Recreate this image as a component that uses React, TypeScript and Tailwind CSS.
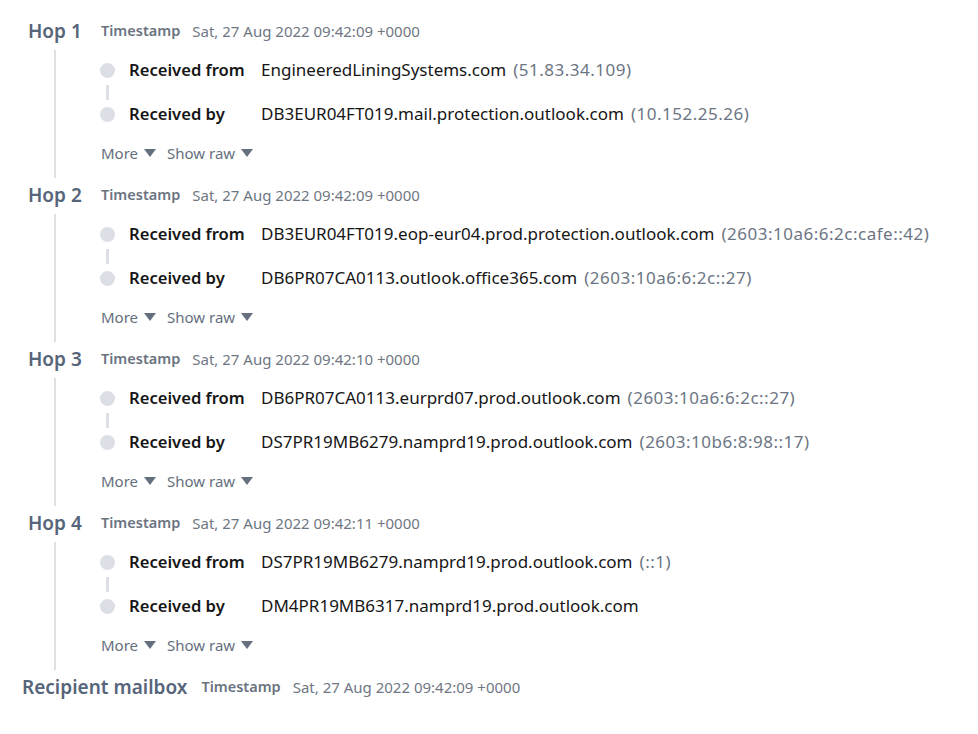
const hops = [
  {
    name: 'Hop 1',
    time: 'Sat, 27 Aug 2022 09:42:09 +0000',
    from: 'EngineeredLiningSystems.com',
    fromIp: '(51.83.34.109)',
    by: 'DB3EUR04FT019.mail.protection.outlook.com',
    byIp: '(10.152.25.26)',
  },
  {
    name: 'Hop 2',
    time: 'Sat, 27 Aug 2022 09:42:09 +0000',
    from: 'DB3EUR04FT019.eop-eur04.prod.protection.outlook.com',
    fromIp: '(2603:10a6:6:2c:cafe::42)',
    by: 'DB6PR07CA0113.outlook.office365.com',
    byIp: '(2603:10a6:6:2c::27)',
  },
  {
    name: 'Hop 3',
    time: 'Sat, 27 Aug 2022 09:42:10 +0000',
    from: 'DB6PR07CA0113.eurprd07.prod.outlook.com',
    fromIp: '(2603:10a6:6:2c::27)',
    by: 'DS7PR19MB6279.namprd19.prod.outlook.com',
    byIp: '(2603:10b6:8:98::17)',
  },
  {
    name: 'Hop 4',
    time: 'Sat, 27 Aug 2022 09:42:11 +0000',
    from: 'DS7PR19MB6279.namprd19.prod.outlook.com',
    fromIp: '(::1)',
    by: 'DM4PR19MB6317.namprd19.prod.outlook.com',
    byIp: '',
  },
];

function Caret() {
  return (
    <svg className="w-[12px] h-[8px] ml-[6px] shrink-0" viewBox="0 0 12 8" fill="currentColor">
      <path d="M0 0h12L6 8z" />
    </svg>
  );
}

function Stamp({ time }: { time: string }) {
  return (
    <div className="flex items-center gap-[12px] whitespace-nowrap">
      <span className="text-[14.5px] font-semibold text-[#6a7380]">Timestamp</span>
      <span className="text-[15px] text-[#6f7783]">{time}</span>
    </div>
  );
}

function Row({ label, value, ip }: { label: string; value: string; ip: string }) {
  return (
    <div className="flex items-center h-6 whitespace-nowrap">
      <div className="w-[15px] h-[15px] shrink-0 rounded-full bg-[#dcdfe5]" />
      <span className="ml-[14px] w-[132px] shrink-0 text-[16.6px] font-semibold text-[#161616]">{label}</span>
      <span className="text-[17px] text-[#161616]">{value}</span>
      {ip && <span className="ml-[7px] text-[17px] tracking-[0.5px] text-[#6c7584]">{ip}</span>}
    </div>
  );
}

export default function App() {
  return (
    <div className="bg-white w-[978px] h-[734px] pt-[19px]" style={{ fontFamily: '"Noto Sans", sans-serif' }}>
      {hops.map((h) => (
        <div key={h.name}>
          <div className="flex items-center h-6 pl-[28px]">
            <span className="w-[73px] shrink-0 text-[19px] font-semibold text-[#56657a]">{h.name}</span>
            <Stamp time={h.time} />
          </div>
          <div className="ml-[54px] mt-[7px] mb-[5px] h-[128px] border-l-2 border-[#e0e0e0] pl-[44px] pt-[8px]">
            <Row label="Received from" value={h.from} ip={h.fromIp} />
            <div className="h-[20px] flex items-center pl-[6px]">
              <div className="w-[3px] h-[15px] bg-[#dcdfe5]" />
            </div>
            <Row label="Received by" value={h.by} ip={h.byIp} />
            <div className="flex items-center h-5 mt-[17px] pl-[1px] text-[15px] text-[#65707e]">
              <span className="flex items-center">More<Caret /></span>
              <span className="flex items-center ml-[11px]">Show raw<Caret /></span>
            </div>
          </div>
        </div>
      ))}
      <div className="flex items-center h-6 pl-[22px]">
        <span className="mr-[14px] text-[19px] font-semibold text-[#56657a]">Recipient mailbox</span>
        <Stamp time="Sat, 27 Aug 2022 09:42:09 +0000" />
      </div>
    </div>
  );
}
